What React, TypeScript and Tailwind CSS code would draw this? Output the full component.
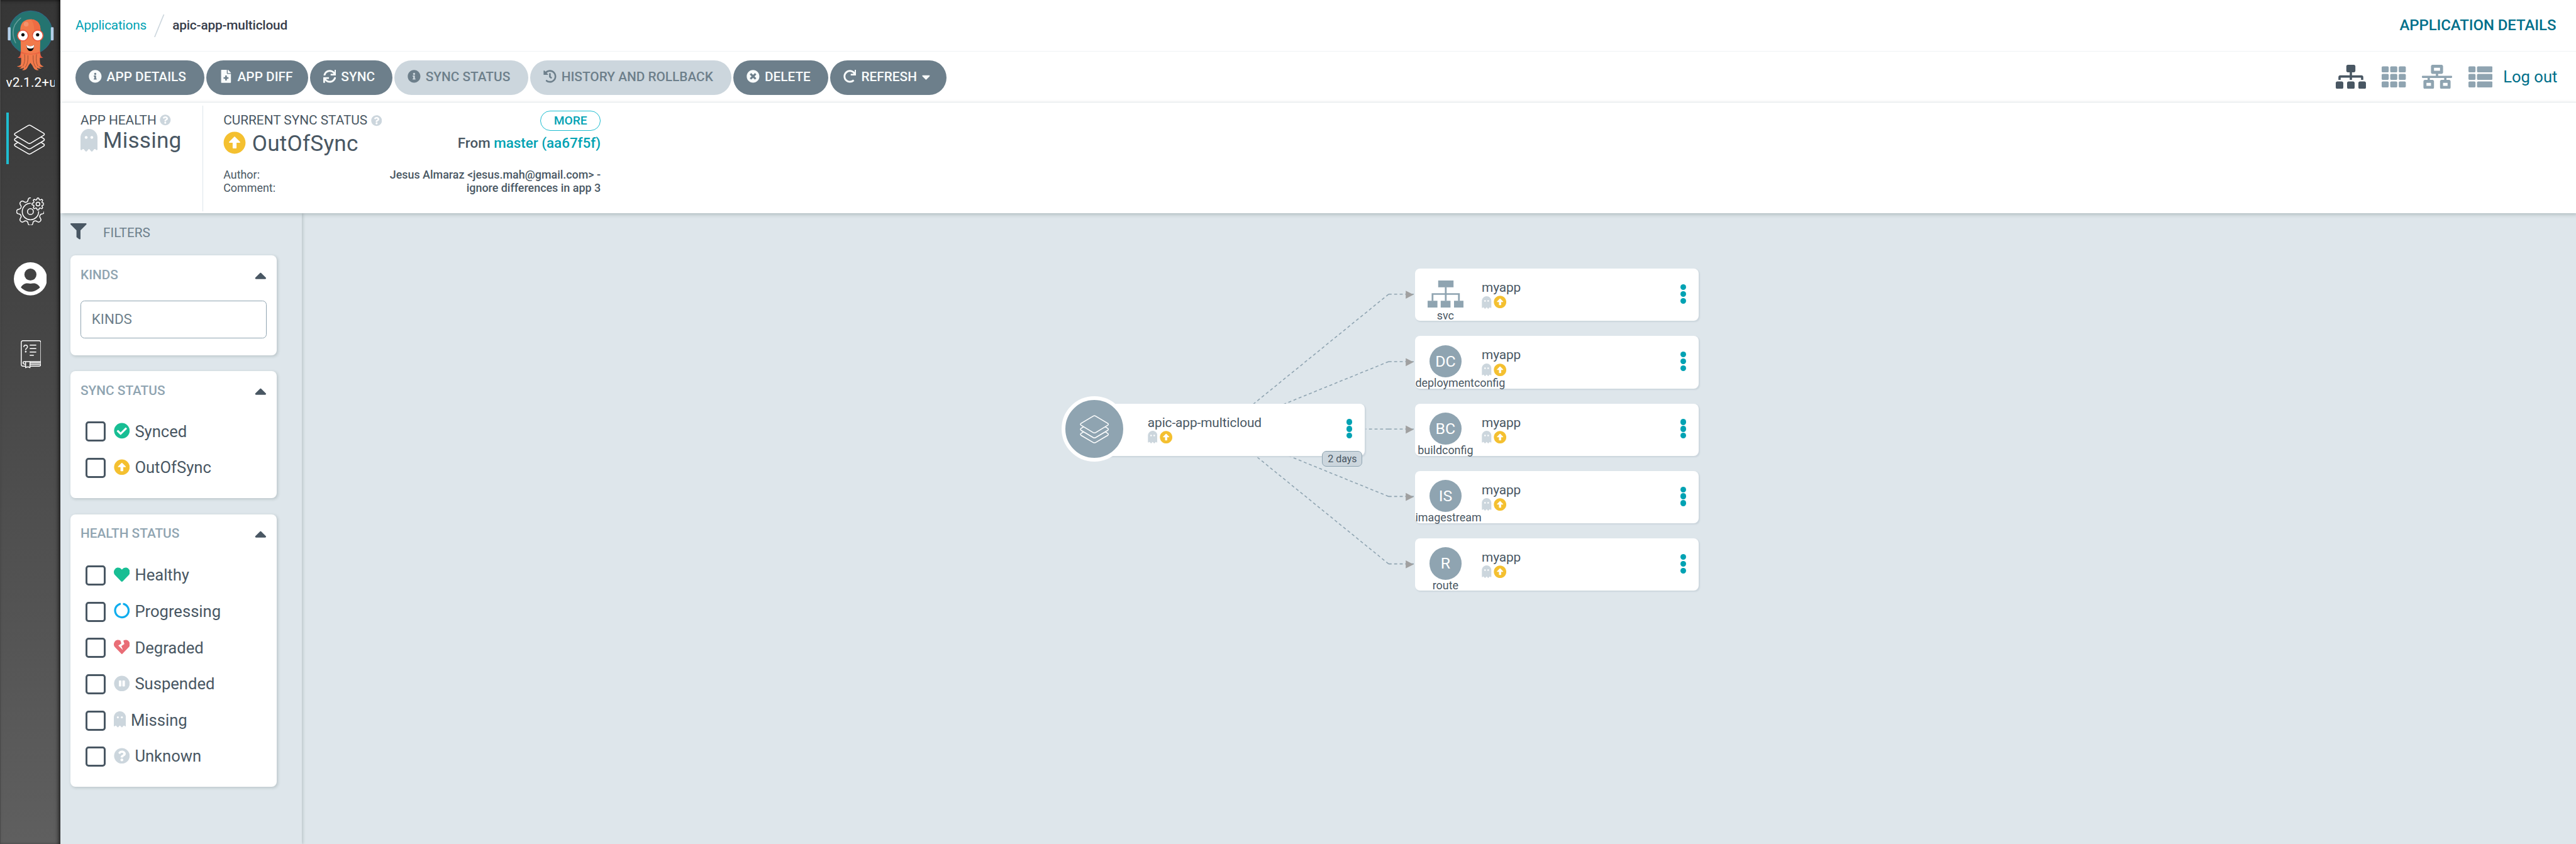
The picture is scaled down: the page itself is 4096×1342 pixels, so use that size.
import React from "react";
import {
  FaArrowAltCircleUp, FaCaretDown, FaCaretUp, FaCheckCircle, FaCircleNotch, FaFileMedical, FaFilter,
  FaGhost, FaHeart, FaHeartBroken, FaHistory, FaInfoCircle, FaNetworkWired, FaPauseCircle,
  FaQuestionCircle, FaRedo, FaSitemap, FaSync, FaTh, FaThList, FaTimesCircle,
} from "react-icons/fa";

/* ---------- drawings ---------- */

function gearPath(cx: number, cy: number, inner: number, outer: number, teeth: number, from: number, to: number, k: number) {
  const pts: string[] = [];
  const steps = 240;
  const norm = Math.tanh(k);
  for (let i = 0; i <= steps; i++) {
    const a = ((from + ((to - from) * i) / steps) * Math.PI) / 180;
    const r = (inner + outer) / 2 + (((outer - inner) / 2) * Math.tanh(k * Math.cos(teeth * a))) / norm;
    pts.push(`${(cx + r * Math.cos(a)).toFixed(2)} ${(cy + r * Math.sin(a)).toFixed(2)}`);
  }
  return "M" + pts.join("L");
}

const GEAR_BIG = gearPath(28, 28, 20.5, 27.3, 8, 0, 270, 1.6);
const GEAR_SMALL = gearPath(43, 13, 8.8, 12, 8, 0, 360, 1.4);

function Layers({ className }: { className: string }) {
  return (
    <svg viewBox="0 0 62 60" className={className} fill="none" stroke="currentColor" strokeWidth="2" strokeLinejoin="round" strokeLinecap="round">
      <path d="M28.5 2Q31 .6 33.5 2L59.3 17.4Q62 19.3 59.3 21.4L33.5 37Q31 38.3 28.5 37L2.7 21.4Q0 19.3 2.7 17.4Z" />
      <path d="M7.5 25L2.7 28Q0 30 2.7 32.2L28.5 47.6Q31 49 33.5 47.6L59.3 32.2Q62 30 59.3 28L54.5 25" />
      <path d="M7.5 35.7L2.7 38.7Q0 40.7 2.7 42.9L28.5 58Q31 59.4 33.5 58L59.3 42.9Q62 40.7 59.3 38.7L54.5 35.7" />
    </svg>
  );
}

function Gears() {
  return (
    <svg viewBox="0 0 56 56" className="h-[44.8px] w-[44.8px]" fill="none" stroke="white" strokeWidth="1.9" strokeLinecap="round">
      <path d={GEAR_BIG} />
      <path d="M28 11.7A16.3 16.3 0 1 0 44.3 28" />
      <circle cx="28" cy="28" r="5.8" />
      <path d={GEAR_SMALL} />
      <circle cx="43" cy="13" r="3.7" />
    </svg>
  );
}

function User() {
  return (
    <svg viewBox="-33 -33 66 66" className="h-[52.8px] w-[52.8px]">
      <circle r="33" fill="white" />
      <circle cy="-8.6" r="12" fill="#424242" />
      <path d="M-19 17C-16 11-10 8-5 9Q0 10 5 9C10 8 16 11 19 17C13 23 6 25.5 0 25.5S-13 23-19 17Z" fill="#424242" />
    </svg>
  );
}

function Book() {
  return (
    <svg viewBox="0 0 41 56" className="h-[44.8px] w-[32.8px]" fill="none" stroke="white" strokeWidth="1.8" strokeLinecap="round" strokeLinejoin="round">
      <path d="M9 51.5H4.5Q1 51.5 1 48V4.5Q1 1 4.5 1H36.5Q40 1 40 4.5V48Q40 51.5 36.5 51.5H19" />
      <path d="M40 42.4H7.5Q4.6 42.4 4.6 44.8T7.5 47.4H9M19 45H40M19 48.2H40" />
      <path d="M9.6 43V54.6L12 53.2H16L18.3 54.6V43" />
      <path d="M17.8 9.7H30.8M17.8 16.6H30.8M17.8 23.4H30.8M17.8 30H26" strokeLinecap="butt" />
      <path d="M6.2 13Q6.2 9.6 9.7 9.6T13.4 13Q13.4 15 11.3 16Q9.8 16.8 9.8 19" />
      <circle cx="9.8" cy="22.8" r="1.2" fill="white" stroke="white" strokeWidth="1" />
    </svg>
  );
}

function Argo() {
  return (
    <svg viewBox="16 20 92 121" className="h-[96.8px] w-[73.6px]">
      <circle cx="62" cy="64.6" r="42.8" fill="#247470" stroke="#2f6a86" strokeWidth="1.5" />
      <rect x="16.5" y="54.2" width="5.6" height="26" rx="1.6" fill="#b4d0ea" />
      <rect x="102" y="54.2" width="5.6" height="26" rx="1.6" fill="#b4d0ea" />
      <path d="M42 36Q27 48 27 64Q27 75 32 85" fill="none" stroke="#679e9b" strokeWidth="2" strokeLinecap="round" />
      <path d="M42 103Q42 113 36 114.5Q42 117 46 113ZM81 103Q81 113 87 114.5Q81 117 77 113Z" fill="#e65a43" />
      <path
        fill="#f27a4b"
        d="M41.5 62C40.5 45 50 38.4 61.5 38.4S82.500 45 81.500 62L80.500 104C80.500 116 79 127 83 129.500Q86 131.800 88 132Q83 134.500 78 131.500Q80.500 135 84 135.800Q78 137.500 74 134Q74.500 137.500 78.500 139Q71 141.200 67.500 134.500Q65 129 61.500 125Q58 129 55.500 134.500Q52 141.200 44.500 139Q48.500 137.500 49 134Q45 137.500 39 135.800Q42.500 135 45 131.500Q40 134.500 34.500 132Q39 131.500 41.500 129.500Q44 127 42.500 104Z"
      />
      <path d="M50 108Q51.500 124 46.500 131.500M56.500 110Q57.500 127 51 134M67 110Q66 127 72.500 134M73.500 108Q71.500 124 76.500 131.500" fill="none" stroke="#8a4630" strokeWidth="1" />
      <path d="M61.500 38.400Q69 44 69 60L81.500 62C82.500 45 73 38.400 61.500 38.400Z" fill="#ef6c43" />
      <path d="M42.300 102Q61.500 112 80.800 102L80.700 106Q61.500 111 42.500 106Z" fill="#ec6442" />
      <circle cx="53" cy="48.200" r="4.700" fill="#f4936c" />
      <circle cx="46.500" cy="70.600" r="10.600" fill="white" stroke="#e8563e" strokeWidth="2" />
      <circle cx="76" cy="70.600" r="10.600" fill="white" stroke="#e8563e" strokeWidth="2" />
      <circle cx="46.600" cy="69.100" r="3.200" fill="black" />
      <circle cx="75.800" cy="69.100" r="3.200" fill="black" />
      <path d="M53.500 89Q61.500 95 69 89Q68 101.500 61.300 101.500T53.500 89Z" fill="black" />
      <path d="M53.500 89Q61.500 95 69 89Q68.600 92.800 67.400 95Q61.500 98.400 55.200 95Q54 92.500 53.500 89Z" fill="white" />
    </svg>
  );
}

function ServiceIcon() {
  return (
    <svg viewBox="0 0 72 54" className="h-[43.2px] w-[57.6px]" fill="#8fa4b1">
      <rect x="21" y="0" width="30.500" height="13.500" />
      <rect x="34.300" y="13" width="3.500" height="27.500" />
      <path d="M8 40.500V25.200H64V40.500H60.500V28.500H11.500V40.500Z" />
      <rect x="0" y="40.300" width="19.500" height="13.500" />
      <rect x="26" y="40.300" width="19.500" height="13.500" />
      <rect x="52.500" y="40.300" width="19.500" height="13.500" />
    </svg>
  );
}

/* ---------- sidebar ---------- */

function Sidebar() {
  return (
    <aside className="relative z-20 flex h-full w-[96px] shrink-0 flex-col border-l border-[#4a4a4a] bg-linear-to-b from-[#363636] to-[#5f5f5f] shadow-[inset_-5px_0_7px_-3px_rgba(0,0,0,0.75),inset_0_4px_6px_-4px_rgba(0,0,0,0.5)]">
      <div className="mt-[16px] flex justify-center pl-px">
        <Argo />
      </div>
      <div className="mt-[6.400px] ml-[8.600px] h-[24px] w-[77px] overflow-hidden text-[21px] leading-[24px] whitespace-nowrap text-white">v2.1.2+u</div>
      <div className="mt-[36px] ml-[8.600px] flex h-[81.600px] items-center border-l-[4.800px] border-[#1fbdd0] pt-[4px] pl-[8.800px] text-white">
        <Layers className="h-[48px] w-[49.600px]" />
      </div>
      <div className="mt-[52.800px] flex justify-center pr-px"><Gears /></div>
      <div className="mt-[58.800px] flex justify-center pr-px"><User /></div>
      <div className="mt-[70.800px] flex justify-center pl-px"><Book /></div>
    </aside>
  );
}

/* ---------- header ---------- */

function ActionButton({ icon, label, disabled, width, caret }: { icon: React.ReactNode; label: string; disabled?: boolean; width: string; caret?: boolean }) {
  const tone = disabled ? "bg-[#ccd6dd] text-[#6d7f8b]" : "bg-[#6d7f8b] text-[#f8fbfb]";
  return (
    <button className={`flex h-[54.400px] items-center rounded-full pb-[1.600px] pl-[20.800px] text-[20.800px] font-medium whitespace-nowrap ${tone} ${width}`}>
      <span className="mr-[8px] pb-[1.600px]">{icon}</span>
      {label}
      {caret && <FaCaretDown className="ml-[4px] h-[20.800px]" />}
    </button>
  );
}

function TopBar() {
  return (
    <div className="flex h-[81.600px] items-center justify-between border-b-[1.600px] border-[#eff3f5] pr-[31.600px] pl-[24px]">
      <div className="flex items-center text-[20.800px] tracking-[-0.180px]">
        <span className="text-[#00a2b3]">Applications</span>
        <svg viewBox="0 0 20 44" className="mx-[12.400px] mt-[2.400px] h-[36px] w-[16.400px]">
          <path d="M19 0L1 44" stroke="#ccd6dd" strokeWidth="2" />
        </svg>
        <span className="font-medium text-[#363c4a]">apic-app-multicloud</span>
      </div>
      <span className="text-[24px] font-medium tracking-[-0.080px] text-[#006f8a]">APPLICATION DETAILS</span>
    </div>
  );
}

function ToolBar() {
  const i = "h-[20.800px]";
  return (
    <div className="flex h-[81.600px] items-center justify-between border-b-[1.600px] border-[#eff3f5] pr-[29.600px] pl-[24px]">
      <div className="flex gap-[3.200px] pt-[3.200px]">
        <ActionButton icon={<FaInfoCircle className={i} />} label="APP DETAILS" width="w-[204.800px]" />
        <ActionButton icon={<FaFileMedical className={i} />} label="APP DIFF" width="w-[161.600px]" />
        <ActionButton icon={<FaSync className={i} />} label="SYNC" width="w-[131.200px]" />
        <ActionButton icon={<FaInfoCircle className={i} />} label="SYNC STATUS" width="w-[212.800px]" disabled />
        <ActionButton icon={<FaHistory className={i} />} label="HISTORY AND ROLLBACK" width="w-[320px]" disabled />
        <ActionButton icon={<FaTimesCircle className={i} />} label="DELETE" width="w-[150.400px]" />
        <ActionButton icon={<FaRedo className={i} />} label="REFRESH" width="w-[185.600px]" caret />
      </div>
      <div className="flex items-center text-[38.400px] text-[#8fa4b1]">
        <FaSitemap className="mr-[25.600px] w-[48px] text-[#495763]" />
        <FaTh className="mr-[25.600px]" />
        <FaNetworkWired className="mr-[25.600px] w-[48px]" />
        <FaThList className="mr-[16.800px]" />
        <span className="text-[25.600px] text-[#006f8a]">Log out</span>
      </div>
    </div>
  );
}

function StatusPanel() {
  return (
    <div className="relative z-10 flex h-[176px] bg-white text-[#495763] shadow-[2px_2px_6px_rgba(60,80,80,0.300)]">
      <div className="mt-[4.800px] h-[168px] w-[227.200px] border-r-[1.600px] border-[#dee6eb] pt-[11.200px] pl-[32px]">
        <div className="flex h-[24px] items-center text-[20.800px] whitespace-nowrap">
          APP HEALTH
          <FaQuestionCircle className="ml-[5.600px] h-[17.600px] w-[17.600px] text-[#ccd6dd]" />
        </div>
        <div className="flex h-[40px] items-center text-[35.200px] tracking-[0.200px]">
          <FaGhost className="mr-[8.800px] h-[36px] w-[27px] text-[#ccd6dd]" />
          Missing
        </div>
      </div>
      <div className="w-[632px] pl-[32px] pt-[12.800px]">
        <div className="flex h-[32px] items-center justify-between">
          <div className="flex items-center text-[20.800px] whitespace-nowrap">
            CURRENT SYNC STATUS
            <FaQuestionCircle className="ml-[5.600px] h-[17.600px] w-[17.600px] text-[#ccd6dd]" />
          </div>
          <div className="flex h-[32px] w-[96px] items-center justify-center rounded-full border-[1.600px] border-[#1fbdd0] text-[19.200px] font-medium text-[#00a2b3]">MORE</div>
        </div>
        <div className="flex h-[40px] items-center justify-between">
          <div className="flex items-center text-[35.200px] tracking-[0.200px]">
            <FaArrowAltCircleUp className="mr-[9.600px] mb-[2.400px] h-[36px] w-[36px] text-[#f4c030]" />
            OutOfSync
          </div>
          <div className="text-[22.400px] font-medium">
            From <span className="text-[#00a2b3]">master (aa67f5f)</span>
          </div>
        </div>
        <div className="mt-[20px] flex justify-between text-[17.920px] leading-[20.800px]">
          <div>Author:<br />Comment:</div>
          <div className="text-right font-medium">Jesus Almaraz &lt;jesus.mah@gmail.com&gt; -<br />ignore differences in app 3</div>
        </div>
      </div>
    </div>
  );
}

/* ---------- filters ---------- */

function FilterCard({ title, className, children }: { title: string; className: string; children: React.ReactNode }) {
  return (
    <section className={`w-[328px] rounded-[8px] bg-white px-[16px] pt-[19.200px] shadow-[1.600px_1.600px_4px_rgba(60,80,80,0.200)] ${className}`}>
      <div className="flex h-[24px] items-center justify-between text-[20.800px] font-medium text-[#8fa4b1]">
        {title}
        <FaCaretUp className="h-[30px] w-[18.750px] text-[#495763]" />
      </div>
      {children}
    </section>
  );
}

function Check({ icon, label }: { icon: React.ReactNode; label: string }) {
  return (
    <div className="flex h-[57.600px] items-center pl-[8px] text-[25.600px] text-[#495763]">
      <span className="mr-[12.800px] h-[32px] w-[32px] rounded-[4.800px] border-[3.200px] border-[#495763]" />
      <span className="mr-[8px] mb-[3.200px] text-[25.600px]">{icon}</span>
      <span className="mb-[1.200px]">{label}</span>
    </div>
  );
}

function Filters() {
  return (
    <div className="h-full w-[384px] shrink-0 pl-[16px] pt-[16px] shadow-[1.600px_0_4px_rgba(60,80,80,0.200)]">
      <div className="flex h-[25.600px] items-center">
        <FaFilter className="h-[25.600px] w-[25.600px] text-[#495763]" />
        <span className="ml-[26.400px] pt-[6px] text-[20.800px] text-[#6d7f8b]">FILTERS</span>
      </div>
      <FilterCard title="KINDS" className="mt-[25.600px] h-[158.400px]">
        <div className="mt-[28.800px] flex h-[59.200px] items-center rounded-[6.400px] border-[1.600px] border-[#8fa4b1] pl-[16.800px] text-[22.400px] text-[#6d7f8b]">KINDS</div>
      </FilterCard>
      <FilterCard title="SYNC STATUS" className="mt-[25.600px] h-[201.600px]">
        <div className="mt-[24px]">
          <Check icon={<FaCheckCircle className="text-[#18be94]" />} label="Synced" />
          <Check icon={<FaArrowAltCircleUp className="text-[#f4c030]" />} label="OutOfSync" />
        </div>
      </FilterCard>
      <FilterCard title="HEALTH STATUS" className="mt-[25.600px] h-[433.600px]">
        <div className="mt-[25.600px]">
          <Check icon={<FaHeart className="text-[#18be94]" />} label="Healthy" />
          <Check icon={<FaCircleNotch className="text-[#0fadee]" />} label="Progressing" />
          <Check icon={<FaHeartBroken className="text-[#e96d76]" />} label="Degraded" />
          <Check icon={<FaPauseCircle className="text-[#ccd6dd]" />} label="Suspended" />
          <Check icon={<FaGhost className="w-[19.200px] text-[#ccd6dd]" />} label="Missing" />
          <Check icon={<FaQuestionCircle className="text-[#ccd6dd]" />} label="Unknown" />
        </div>
      </FilterCard>
    </div>
  );
}

/* ---------- resource graph ---------- */

const NODES = [
  { kind: "svc", top: "top-[88px]" },
  { kind: "deploymentconfig", short: "DC", top: "top-[195.200px]" },
  { kind: "buildconfig", short: "BC", top: "top-[302.400px]" },
  { kind: "imagestream", short: "IS", top: "top-[409.600px]" },
  { kind: "route", short: "R", top: "top-[516.800px]" },
];

const NODE_BOX = "absolute flex h-[83.200px] w-[451.200px] rounded-[8px] bg-white shadow-[1.600px_1.600px_2px_#ccd6dd]";

function NodeBody({ name }: { name: string }) {
  return (
    <>
      <div className="pt-[16px]">
        <div className="h-[27.200px] text-[20.800px] leading-[28px] tracking-[-0.080px] whitespace-nowrap">{name}</div>
        <div className="flex items-center gap-[3.200px]">
          <FaGhost className="h-[20px] w-[15.600px] text-[#ccd6dd]" />
          <FaArrowAltCircleUp className="h-[20.400px] w-[20.400px] text-[#f4c030]" />
        </div>
      </div>
      <div className="mt-[24.800px] mr-[19.600px] ml-auto flex flex-col gap-[1.600px]">
        <span className="h-[9.300px] w-[9.300px] rounded-full bg-[#00a2b3]" />
        <span className="h-[9.300px] w-[9.300px] rounded-full bg-[#00a2b3]" />
        <span className="h-[9.300px] w-[9.300px] rounded-full bg-[#00a2b3]" />
      </div>
    </>
  );
}

function Connectors() {
  const ys = [161, 295, 429, 563, 697];
  return (
    <svg viewBox="2430 0 382 860" className="absolute top-0 left-[1464px] h-[688px] w-[305.600px]" fill="none" stroke="#8fa4b1" strokeWidth="2">
      {ys.map((y) => (
        <g key={y}>
          <path d={`M2760 ${y}L2430 429`} strokeDasharray="6 5" />
          <path d={`M2760 ${y}H2810`} strokeDasharray="6 5" />
          <path d={`M2794 ${y - 7}L2809.500 ${y + 1}L2794 ${y + 9}Z`} fill="#a0a0a0" stroke="none" />
        </g>
      ))}
    </svg>
  );
}

function Graph() {
  return (
    <div className="relative h-full grow text-[#495763]">
      <Connectors />
      <div className={`${NODE_BOX} top-[302.400px] left-[1238.400px]`}>
        <div className="-mt-[11.200px] -ml-[30.400px] flex h-[104px] w-[104px] shrink-0 items-center justify-center rounded-full border-[6.400px] border-white bg-[#8fa4b1] text-white">
          <Layers className="h-[45.200px] w-[46.400px]" />
        </div>
        <div className="w-[32.800px] shrink-0" />
        <NodeBody name="apic-app-multicloud" />
        <div className="absolute right-[3.200px] -bottom-[17.600px] flex h-[25.600px] w-[64px] items-center justify-center rounded-[7px] border-[1.600px] border-[#8fa4b1] bg-[#ccd6dd] text-[16px] whitespace-nowrap">2 days</div>
      </div>
      {NODES.map((n) => (
        <div key={n.kind} className={`${NODE_BOX} ${n.top} left-[1769.600px]`}>
          <div className="ml-[0.800px] flex w-[96px] shrink-0 flex-col items-center">
            {n.short ? (
              <div className="mt-[14.400px] flex h-[51.200px] w-[51.200px] items-center justify-center rounded-full bg-[#8fa4b1] text-[24.800px] text-white">{n.short}</div>
            ) : (
              <div className="mt-[18.400px] mb-[4px] h-[43.200px]"><ServiceIcon /></div>
            )}
            <div className="h-[17.600px] w-full text-center text-[17.920px] leading-[17.600px] whitespace-nowrap">{n.kind}</div>
          </div>
          <div className="w-[9.600px] shrink-0" />
          <NodeBody name="myapp" />
        </div>
      ))}
    </div>
  );
}

export default function App() {
  return (
    <div className="flex h-[1342px] w-[4096px] overflow-hidden bg-[#dee6eb] font-['Roboto',sans-serif]">
      <Sidebar />
      <main className="flex min-w-0 grow flex-col">
        <header className="relative z-10 bg-white">
          <TopBar />
          <ToolBar />
          <StatusPanel />
        </header>
        <div className="flex min-h-0 grow">
          <Filters />
          <Graph />
        </div>
      </main>
    </div>
  );
}
